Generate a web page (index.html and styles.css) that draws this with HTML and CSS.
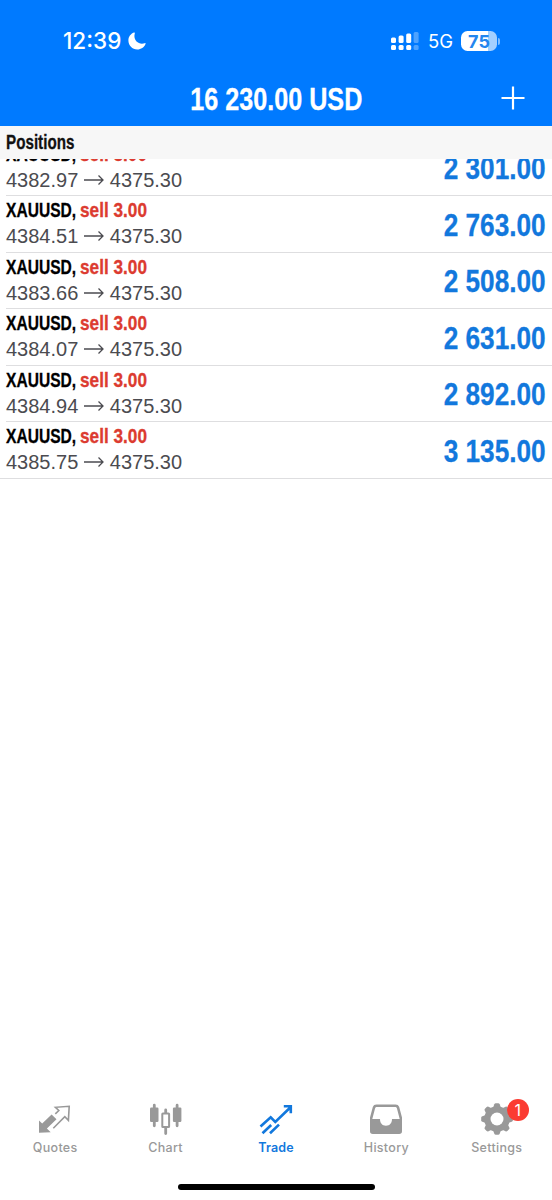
FILE: index.html
```html
<!DOCTYPE html>
<html lang="en">
<head>
<meta charset="utf-8">
<title>Trade</title>
<link rel="stylesheet" href="styles.css">
</head>
<body>
<div class="app">
  <header class="header">
    <div class="status">
      <div class="clock"><span class="time">12:39</span>
        <svg class="moon" width="18" height="18" viewBox="0 0 18 18"><path d="M5.900.6C2.600 1.900.4 4.900.4 8.600c0 5 3.900 8.900 8.900 8.900 3.700 0 6.900-2.300 8.200-5.500.3-.7-.2-1.100-.8-.8-.8.3-1.700.5-2.700.5-4.400 0-7.600-3.200-7.600-7.600 0-.9.200-1.800.4-2.600.2-.7-.3-1.100-.9-.9z" fill="#fff"/></svg>
      </div>
      <div class="indicators">
        <svg class="signal" width="28" height="18" viewBox="0 0 28 18" fill="#fff">
          <rect x="0" y="5.500" width="5" height="5.500" rx="1.500"/><rect x="7.600" y="3.500" width="5" height="7.500" rx="1.500"/><rect x="15.200" y="1.500" width="5" height="9.500" rx="1.500"/>
          <rect x="0" y="13" width="5" height="5" rx="1.500"/><rect x="7.600" y="13" width="5" height="5" rx="1.500"/><rect x="15.200" y="13" width="5" height="5" rx="1.500"/>
          <g opacity=".3"><rect x="22.600" y="0" width="5" height="11" rx="1.500"/><rect x="22.600" y="13" width="5" height="5" rx="1.500"/></g>
        </svg>
        <span class="network">5G</span>
        <div class="battery"><span class="level">75</span></div><i class="battery-tip"></i>
      </div>
    </div>
    <div class="titlebar">
      <h1 class="title">16 230.00 USD</h1>
      <svg class="plus" width="24" height="24" viewBox="0 0 24 24"><path d="M12 .5v23M.5 12h23" stroke="#fff" stroke-width="2.200"/></svg>
    </div>
  </header>
  <div class="section"><span class="section-name">Positions</span></div>
  <main class="list">
    <div class="row"><div class="info"><div class="name"><b class="symbol">XAUUSD,</b><b class="side">sell 3.00</b></div><div class="prices"><span>4382.97</span><svg class="arrow" viewBox="0 0 20 12"><path d="M0 6h19M14.500 1.500 19 6l-4.500 4.500"/></svg><span>4375.30</span></div></div><div class="profit">2 301.00</div></div>
    <div class="row"><div class="info"><div class="name"><b class="symbol">XAUUSD,</b><b class="side">sell 3.00</b></div><div class="prices"><span>4384.51</span><svg class="arrow" viewBox="0 0 20 12"><path d="M0 6h19M14.500 1.500 19 6l-4.500 4.500"/></svg><span>4375.30</span></div></div><div class="profit">2 763.00</div></div>
    <div class="row"><div class="info"><div class="name"><b class="symbol">XAUUSD,</b><b class="side">sell 3.00</b></div><div class="prices"><span>4383.66</span><svg class="arrow" viewBox="0 0 20 12"><path d="M0 6h19M14.500 1.500 19 6l-4.500 4.500"/></svg><span>4375.30</span></div></div><div class="profit">2 508.00</div></div>
    <div class="row"><div class="info"><div class="name"><b class="symbol">XAUUSD,</b><b class="side">sell 3.00</b></div><div class="prices"><span>4384.07</span><svg class="arrow" viewBox="0 0 20 12"><path d="M0 6h19M14.500 1.500 19 6l-4.500 4.500"/></svg><span>4375.30</span></div></div><div class="profit">2 631.00</div></div>
    <div class="row"><div class="info"><div class="name"><b class="symbol">XAUUSD,</b><b class="side">sell 3.00</b></div><div class="prices"><span>4384.94</span><svg class="arrow" viewBox="0 0 20 12"><path d="M0 6h19M14.500 1.500 19 6l-4.500 4.500"/></svg><span>4375.30</span></div></div><div class="profit">2 892.00</div></div>
    <div class="row last"><div class="info"><div class="name"><b class="symbol">XAUUSD,</b><b class="side">sell 3.00</b></div><div class="prices"><span>4385.75</span><svg class="arrow" viewBox="0 0 20 12"><path d="M0 6h19M14.500 1.500 19 6l-4.500 4.500"/></svg><span>4375.30</span></div></div><div class="profit">3 135.00</div></div>
  </main>
  <nav class="tabs">
    <div class="tab">
      <svg width="36" height="36" viewBox="0 0 36 36"><path d="M2 30.800V18.500l3.200 2.900 9.400-8.900 4.900 4.700-9.600 9.300 3.800 3.700z" fill="#999"/><path d="M18.300 11.800 21.800 8.500 18.400 5.300 32.200 4.300 31.400 18.300 27.800 14.700 16.300 26.300" fill="none" stroke="#999" stroke-width="1.600"/></svg>
      <span class="label">Quotes</span>
    </div>
    <div class="tab">
      <svg width="36" height="36" viewBox="0 0 36 36" fill="#999"><rect x="2" y="5.500" width="8.500" height="14.500" rx="1.200"/><path d="M4.900 3.200a1.400 1.400 0 0 1 2.800 0v20.600a1.400 1.400 0 0 1-2.800 0zM27.700 3.200a1.400 1.400 0 0 1 2.800 0v20.600a1.400 1.400 0 0 1-2.800 0z"/><rect x="24.900" y="5.500" width="8.500" height="14.500" rx="1.200"/><path d="M17.700 8V11M17.700 26v5.500" stroke="#999" stroke-width="2.800" stroke-linecap="round"/><rect x="14.300" y="11.500" width="6.800" height="13.500" rx=".6" fill="#fff" stroke="#999" stroke-width="2"/></svg>
      <span class="label">Chart</span>
    </div>
    <div class="tab active">
      <svg width="36" height="36" viewBox="0 0 36 36" fill="none" stroke="#1278dd" stroke-width="2.600"><path d="m2.500 24.500 10.200-9.200 4.600 4.600L32 5.800M25.800 4.300h7v7M4.500 31.300l8.700-8.300M12 31.300l9-8.700"/></svg>
      <span class="label">Trade</span>
    </div>
    <div class="tab">
      <svg width="36" height="36" viewBox="0 0 36 36"><path fill="#999" fill-rule="evenodd" d="M8.500 2.500h19c2 0 3 .8 3.700 2.600L34 15.500v13.700c0 1.800-1 2.800-2.800 2.800H4.800C3 32 2 31 2 29.200V15.500L4.800 5.100c.7-1.800 1.700-2.600 3.700-2.600zM9 4.900c-1 0-1.600.4-1.900 1.400L4.300 17H12c0 4 2.200 6.700 6 6.700s6-2.700 6-6.700h7.700L28.900 6.300C28.600 5.300 28 4.900 27 4.900z"/></svg>
      <span class="label">History</span>
    </div>
    <div class="tab">
      <div class="icon-wrap"><svg width="36" height="36" viewBox="0 0 36 36"><g fill="#999"><circle cx="18" cy="17" r="12.800"/><path id="tooth" d="M14 6 15.300 2.300Q15.700 1.200 16.800 1.200h2.400q1.100 0 1.500 1.100L22 6v22l-1.300 3.700q-.4 1.100-1.500 1.100h-2.400q-1.100 0-1.500-1.100L14 28z"/><use href="#tooth" transform="rotate(45 18 17)"/><use href="#tooth" transform="rotate(90 18 17)"/><use href="#tooth" transform="rotate(135 18 17)"/></g><circle cx="18" cy="17" r="6.500" fill="#fff"/></svg><span class="badge">1</span></div>
      <span class="label">Settings</span>
    </div>
  </nav>
  <div class="home"><div class="home-bar"></div></div>
</div>
</body>
</html>
```
FILE: styles.css
```css
* { box-sizing: border-box; }
body {
  margin: 0;
  background: #fff;
  font-family: "Liberation Sans", Arial, sans-serif;
}
svg { display: block; flex: none; }
.app {
  width: 552px;
  height: 1200px;
  display: flex;
  flex-direction: column;
  overflow: hidden;
}
.header {
  height: 126px;
  flex: none;
  background: #007aff;
  color: #fff;
}
.status {
  height: 71px;
  padding: 11px 52px 0 63px;
  display: flex;
  justify-content: space-between;
  align-items: center;
  font-family: Inter, sans-serif;
}
.clock { display: flex; align-items: center; gap: 5px; }
.time {
  width: 60px;
  font-size: 22.500px;
  font-weight: 500;
  line-height: 26px;
  white-space: nowrap;
}
.indicators { display: flex; align-items: center; }
.network {
  width: 25px;
  margin: 0 8px 0 9px;
  font-size: 18.500px;
  line-height: 24px;
}
.battery {
  width: 36px;
  height: 20px;
  border-radius: 6.500px;
  background: linear-gradient(90deg, #fff 75%, #a3cfff 75%);
  text-align: center;
}
.level {
  display: block;
  color: #2386ee;
  font-size: 18px;
  font-weight: 700;
  line-height: 21px;
}
.battery-tip {
  width: 2px;
  height: 7px;
  margin-left: 1px;
  border-radius: 0 2px 2px 0;
  background: #80bdff;
}
.titlebar {
  height: 55px;
  display: grid;
  grid-template-columns: 51px 1fr 51px;
  align-items: center;
}
.title {
  grid-column: 2;
  justify-self: center;
  margin: 0;
  font-size: 30.500px;
  line-height: 34px;
  white-space: nowrap;
  transform: scaleX(.825);
  -webkit-text-stroke: .3px;
}
.plus { grid-column: 3; margin-top: -1px; }
.section {
  height: 33px;
  flex: none;
  padding: 5px 6px 0;
  background: #f7f7f7;
}
.section-name {
  display: block;
  font-size: 20px;
  line-height: 23px;
  font-weight: bold;
  color: #111;
  transform: scaleX(.76);
  transform-origin: left;
  -webkit-text-stroke: .3px;
}
.list { flex: 1; overflow: hidden; }
.row {
  height: 56.500px;
  margin-left: 6px;
  padding: 3px 6px 0 0;
  border-bottom: 1px solid #dedee0;
  display: flex;
  justify-content: space-between;
}
.row:first-child { margin-top: -19.500px; }
.row.last { margin-left: 0; padding-left: 6px; }
.name {
  display: flex;
  height: 24px;
  font-size: 20.500px;
  line-height: 21px;
  white-space: nowrap;
  -webkit-text-stroke: .3px;
}
.symbol, .side {
  display: block;
  flex: none;
  transform-origin: 0 50%;
}
.symbol { width: 74px; color: #000; transform: scaleX(.76); }
.side { width: 70px; color: #dc3b30; transform: scaleX(.84); }
.prices {
  display: flex;
  align-items: center;
  font-size: 20px;
  line-height: 26px;
  color: #4b4b50;
}
.arrow {
  width: 20px;
  height: 12px;
  margin: 0 6px 0 5.500px;
  fill: none;
  stroke: #4b4b50;
  stroke-width: 1.300;
}
.profit {
  margin-top: 9.500px;
  font-size: 31px;
  line-height: 34px;
  font-weight: bold;
  color: #1278dd;
  white-space: nowrap;
  transform: scaleX(.845);
  transform-origin: right;
  -webkit-text-stroke: .3px;
}
.tabs {
  height: 71px;
  flex: none;
  display: grid;
  grid-template-columns: repeat(5, 1fr);
}
.tab {
  display: flex;
  flex-direction: column;
  align-items: center;
  color: #999;
}
.label {
  margin-top: 1px;
  font: 500 12.500px/18px Inter, sans-serif;
  letter-spacing: .3px;
}
.active .label { color: #1278dd; font-weight: 600; letter-spacing: .1px; }
.icon-wrap { position: relative; }
.badge {
  position: absolute;
  left: 28px;
  top: -3px;
  width: 22px;
  height: 22px;
  border-radius: 50%;
  background: #fb3b32;
  color: #fff;
  text-align: center;
  font: 16px/22px Inter, sans-serif;
}
.home {
  height: 27px;
  flex: none;
  padding-top: 11px;
  display: flex;
  justify-content: center;
}
.home-bar { width: 197px; height: 6px; border-radius: 3px; background: #000; }
```
